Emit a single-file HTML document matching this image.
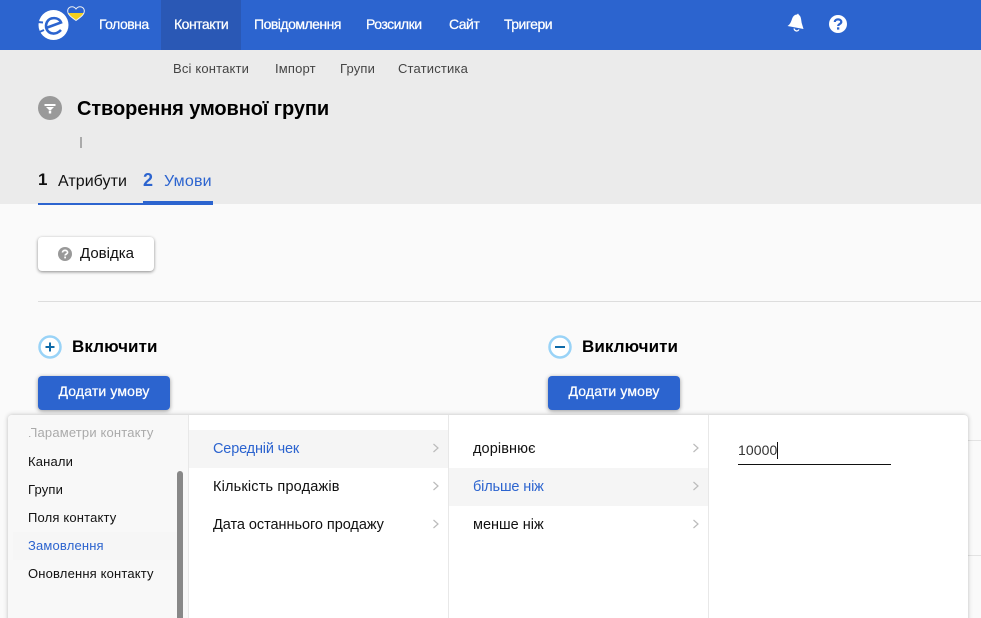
<!DOCTYPE html>
<html lang="uk"><head><meta charset="utf-8"><title>Створення умовної групи</title>
<style>
html,body{margin:0;padding:0;width:981px;height:618px;overflow:hidden;background:#fafafa}
body{position:relative;font-family:"Liberation Sans",sans-serif;color:#000}
.a{position:absolute}
.t{position:absolute;white-space:nowrap;line-height:20px;height:20px}
.nav{color:#fff;font-size:14px;top:14px;-webkit-text-stroke:.25px #fff;letter-spacing:-.5px}
.sub{color:#444;font-size:13px;top:59px;letter-spacing:.17px}
.m{font-size:13px;color:#111;letter-spacing:.17px}
.mm{font-size:14.5px;color:#111}
.blue{color:#2c64cf}
.btn{position:absolute;background:#2c64cf;border-radius:4px;width:132px;height:34px;top:376px;box-shadow:0 1px 4px rgba(0,0,0,.4);color:#fff;font-size:14px;line-height:31px;text-align:center;-webkit-text-stroke:.25px #fff;letter-spacing:.15px}
svg{position:absolute;overflow:visible}
</style></head><body>
<div class="a" style="left:0;top:0;width:981px;height:50px;background:#2c64cf"></div>
<div class="a" style="left:161px;top:0;width:80px;height:50px;background:#2a58b5"></div>
<div class="a" style="left:0;top:50px;width:981px;height:154px;background:#ebebeb"></div>

<svg style="left:38px;top:10px" width="32" height="32" viewBox="0 0 32 32"><circle cx="15.500" cy="15" r="15" fill="#fff"/><path d="M8 18L23 12.500C21 7 12 6.500 9 12C6.500 17 9 23 15 23.500C18 23.700 21 22 23 20" fill="none" stroke="#2c64cf" stroke-width="2.600"/><path d="M0 12L5 12.500M1.500 22L6 20" stroke="#2c64cf" stroke-width="2"/></svg>
<svg style="left:67px;top:6px" width="18" height="15" viewBox="0 0 18 15"><defs><linearGradient id="h" x1="0" y1="0" x2="0" y2="1"><stop offset=".46" stop-color="#2c64cf"/><stop offset=".46" stop-color="#f4cf1d"/></linearGradient></defs><path d="M9 14.500C5 11.500 .7 9 .7 5C.7 2 3 .7 5 .7C7 .7 8.300 2 9 3C9.700 2 11 .7 13 .7C15 .7 17.300 2 17.300 5C17.300 9 13 11.500 9 14.500Z" fill="url(#h)" stroke="#eef0f2" stroke-width="1"/></svg>

<span class="t nav" style="left:99px">Головна</span>
<span class="t nav" style="left:174px">Контакти</span>
<span class="t nav" style="left:254px">Повідомлення</span>
<span class="t nav" style="left:366px">Розсилки</span>
<span class="t nav" style="left:449px">Сайт</span>
<span class="t nav" style="left:504px">Тригери</span>

<svg style="left:787px;top:13px" width="18" height="20" viewBox="0 0 18 20"><path d="M11 .5L12 2C14.500 3.500 14 8 15 11L16.500 16L.5 13C3 11.500 4 9 5 6C6 3 8 1.500 10 1.500Z" fill="#fff"/><path d="M7 15.500C7.500 18 10.500 19 12 16.500" fill="none" stroke="#fff" stroke-width="1.200"/></svg>
<svg style="left:829px;top:15px" width="18" height="18" viewBox="0 0 18 18"><circle cx="9" cy="9" r="9" fill="#fff"/><path d="M5.800 7C5.800 3.500 12.300 3.500 12.300 7C12.300 9 9.200 9 9.200 11" fill="none" stroke="#2c64cf" stroke-width="2.200"/><rect x="8" y="12.300" width="2.300" height="2.300" fill="#2c64cf"/></svg>

<span class="t sub" style="left:173px">Всі контакти</span>
<span class="t sub" style="left:275px">Імпорт</span>
<span class="t sub" style="left:340px">Групи</span>
<span class="t sub" style="left:398px">Статистика</span>

<svg style="left:38px;top:96px" width="24" height="24" viewBox="0 0 24 24"><circle cx="12" cy="12" r="12" fill="#999"/><path d="M6.500 8H17.500V10H6.500Z" fill="#fff"/><path d="M8 11H16L13 14H11Z" fill="#fff"/><rect x="10.800" y="14.500" width="2.400" height="3" fill="#fff"/></svg>
<span class="t" style="left:77px;top:99px;font-size:20px;font-weight:bold;letter-spacing:-.1px">Створення умовної групи</span>
<div class="a" style="left:80px;top:137px;width:2px;height:11px;background:#aaa"></div>

<span class="t" style="left:38px;top:170px;font-size:17px;font-weight:bold;color:#111">1</span>
<span class="t" style="left:58px;top:172px;font-size:16px;color:#111;letter-spacing:.05px">Атрибути</span>
<span class="t blue" style="left:143px;top:170px;font-size:18px;font-weight:bold">2</span>
<span class="t blue" style="left:164px;top:172px;font-size:16px;letter-spacing:.2px">Умови</span>
<div class="a" style="left:38px;top:203px;width:105px;height:2px;background:#2c64cf"></div>
<div class="a" style="left:143px;top:201px;width:70px;height:4px;background:#2c64cf"></div>

<div class="a" style="left:38px;top:237px;width:116px;height:34px;background:#fff;border-radius:4px;box-shadow:0 1px 3px rgba(0,0,0,.45)"></div>
<svg style="left:58px;top:247px" width="14" height="14" viewBox="0 0 18 18"><circle cx="9" cy="9" r="9" fill="#999"/><path d="M5.800 7C5.800 3.500 12.300 3.500 12.300 7C12.300 9 9.200 9 9.200 11" fill="none" stroke="#fff" stroke-width="2.200"/><rect x="8" y="12.300" width="2.300" height="2.300" fill="#fff"/></svg>
<span class="t" style="left:80px;top:244px;font-size:15px;color:#111">Довідка</span>

<div class="a" style="left:38px;top:301px;width:943px;height:1px;background:#ddd"></div>

<svg style="left:38px;top:335px" width="24" height="24" viewBox="0 0 24 24"><circle cx="12" cy="12" r="10.500" fill="#fff" stroke="#99d3f7" stroke-width="2.500"/><path d="M7.500 12H16.500M12 7.500V16.500" stroke="#0e6aa8" stroke-width="2"/></svg>
<span class="t" style="left:72px;top:337px;font-size:17px;font-weight:bold;letter-spacing:.1px">Включити</span>
<svg style="left:548px;top:335px" width="24" height="24" viewBox="0 0 24 24"><circle cx="12" cy="12" r="10.500" fill="#fff" stroke="#99d3f7" stroke-width="2.500"/><path d="M7 12H17" stroke="#0e6aa8" stroke-width="2"/></svg>
<span class="t" style="left:582px;top:337px;font-size:17px;font-weight:bold;letter-spacing:.1px">Виключити</span>
<div class="btn" style="left:38px">Додати умову</div>
<div class="btn" style="left:548px">Додати умову</div>

<div class="a" style="left:968px;top:440px;width:13px;height:1px;background:#e3e3e3"></div>
<div class="a" style="left:968px;top:555px;width:13px;height:1px;background:#e3e3e3"></div>

<div class="a" style="left:8px;top:415px;width:960px;height:220px;background:#fff;border-radius:4px;box-shadow:0 0 5px rgba(0,0,0,.25);overflow:hidden">
 <div class="a" style="left:0;top:0;width:180px;height:220px;background:#f8f8f8"></div>
 <div class="a" style="left:180px;top:0;width:1px;height:220px;background:#e8e8e8"></div>
 <div class="a" style="left:440px;top:0;width:1px;height:220px;background:#e8e8e8"></div>
 <div class="a" style="left:700px;top:0;width:1px;height:220px;background:#e8e8e8"></div>
 <div class="a" style="left:5px;top:117px;width:170px;height:28px;background:#f6f6f6"></div>
 <div class="a" style="left:181px;top:15px;width:259px;height:38px;background:#f5f5f5"></div>
 <div class="a" style="left:441px;top:53px;width:259px;height:38px;background:#f5f5f5"></div>
 <div class="a" style="left:169px;top:56px;width:6px;height:170px;border-radius:3px;background:#888"></div>
</div>

<span class="t m" style="left:28px;top:423px;color:#aaa">Параметри контакту</span>
<div class="a" style="left:26px;top:422px;width:5px;height:14px;background:#f8f8f8"></div>
<span class="t m" style="left:28px;top:452px">Канали</span>
<span class="t m" style="left:28px;top:480px">Групи</span>
<span class="t m" style="left:28px;top:508px">Поля контакту</span>
<span class="t m blue" style="left:28px;top:536px">Замовлення</span>
<span class="t m" style="left:28px;top:564px">Оновлення контакту</span>

<span class="t mm blue" style="left:213px;top:439px;letter-spacing:-.17px">Середній чек</span>
<span class="t mm" style="left:213px;top:477px;letter-spacing:.17px">Кількість продажів</span>
<span class="t mm" style="left:213px;top:515px;letter-spacing:-.05px">Дата останнього продажу</span>
<span class="t mm" style="left:473px;top:439px;letter-spacing:.1px">дорівнює</span>
<span class="t mm blue" style="left:473px;top:477px;letter-spacing:-.15px">більше ніж</span>
<span class="t mm" style="left:473px;top:515px">менше ніж</span>

<svg style="left:432px;top:443px" width="8" height="10" viewBox="0 0 8 10"><path d="M1.500 1L6 5L1.500 9" fill="none" stroke="#bbb" stroke-width="1.200"/></svg>
<svg style="left:432px;top:481px" width="8" height="10" viewBox="0 0 8 10"><path d="M1.500 1L6 5L1.500 9" fill="none" stroke="#bbb" stroke-width="1.200"/></svg>
<svg style="left:432px;top:519px" width="8" height="10" viewBox="0 0 8 10"><path d="M1.500 1L6 5L1.500 9" fill="none" stroke="#bbb" stroke-width="1.200"/></svg>
<svg style="left:692px;top:443px" width="8" height="10" viewBox="0 0 8 10"><path d="M1.500 1L6 5L1.500 9" fill="none" stroke="#bbb" stroke-width="1.200"/></svg>
<svg style="left:692px;top:481px" width="8" height="10" viewBox="0 0 8 10"><path d="M1.500 1L6 5L1.500 9" fill="none" stroke="#bbb" stroke-width="1.200"/></svg>
<svg style="left:692px;top:519px" width="8" height="10" viewBox="0 0 8 10"><path d="M1.500 1L6 5L1.500 9" fill="none" stroke="#bbb" stroke-width="1.200"/></svg>

<span class="t" style="left:738px;top:440px;font-size:14px;color:#333;letter-spacing:.1px">10000</span>
<div class="a" style="left:777px;top:442px;width:1px;height:17px;background:#111"></div>
<div class="a" style="left:738px;top:464px;width:153px;height:1px;background:#111"></div>
</body></html>
